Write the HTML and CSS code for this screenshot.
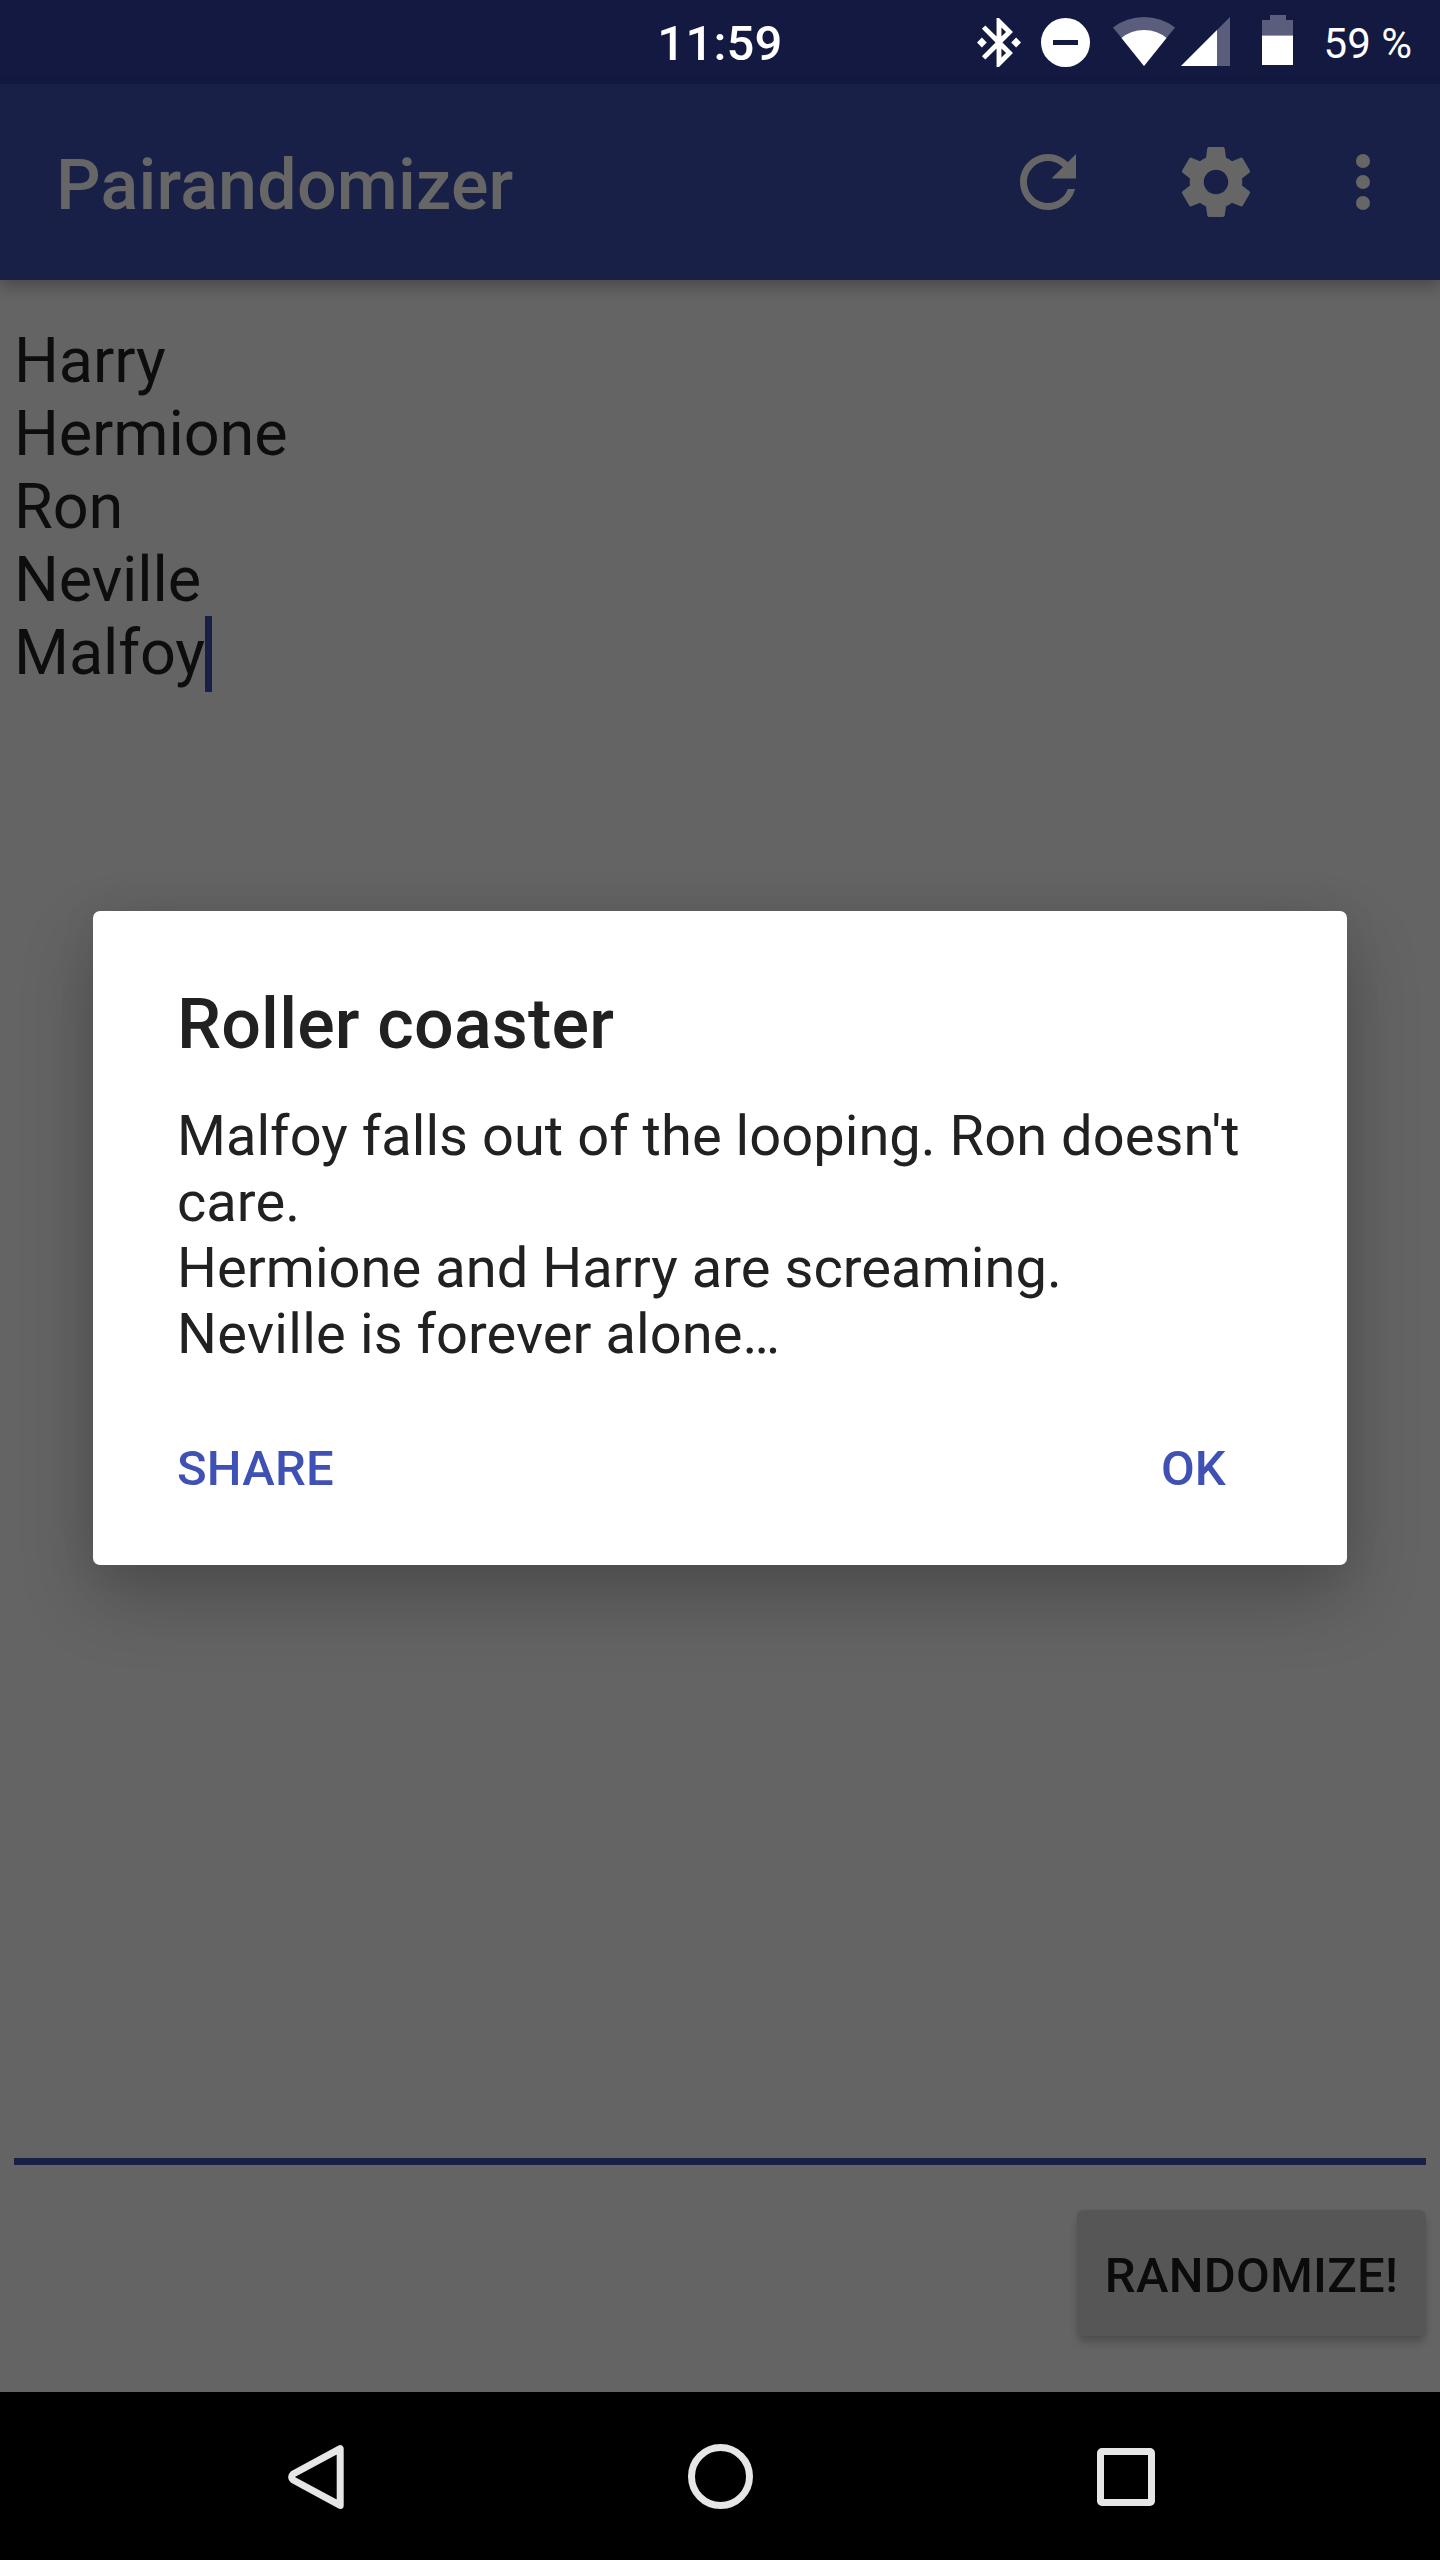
FILE: index.html
```html
<!DOCTYPE html>
<html lang="en">
<head>
<meta charset="utf-8">
<title>Pairandomizer</title>
<link rel="stylesheet" href="styles.css">
</head>
<body>
<div class="screen">
  <header class="status">
    <span></span>
    <span class="clock">11:59</span>
    <div class="status-icons">
      <svg class="bluetooth" viewBox="3 2 18 20"><path d="M7 12l-2-2-2 2 2 2 2-2zm10.71-4.29L12 2h-1v7.59L6.41 5 5 6.41 10.59 12 5 17.59 6.41 19 11 14.41V22h1l5.71-5.71-4.3-4.29 4.3-4.29zM13 5.83l1.88 1.88L13 9.59V5.83zm1.88 10.46L13 18.17v-3.76l1.88 1.88zM19 10l-2 2 2 2 2-2-2-2z"/></svg>
      <svg class="dnd" viewBox="0 0 49 49"><path fill-rule="evenodd" d="M24.5 0a24.5 24.5 0 1 0 0 49a24.5 24.5 0 1 0 0-49zM12 22h25v5H12z"/></svg>
      <svg class="wifi" viewBox="0 0 62 49"><path class="faint" d="M31 49L0 10.5Q13.500 0 31 0T62 10.500z"/><path d="M31 49L8.500 21Q18 13 31 13T53.500 21z"/></svg>
      <svg class="cell" viewBox="0 0 49 49"><path class="faint" d="M0 49L49 0V49z"/><path d="M0 49L36 13V49z"/></svg>
      <svg class="battery" viewBox="0 0 31 50"><path class="faint" d="M8 0h16v5h7v15.500H0V5h8z"/><path d="M0 20.500h31V50H0z"/></svg>
      <span class="percent">59 %</span>
    </div>
  </header>

  <div class="appbar">
    <h1 class="app-title">Pairandomizer</h1>
    <svg class="action" viewBox="0 0 24 24"><path d="M17.650 6.350C16.200 4.900 14.210 4 12 4c-4.420 0-7.990 3.580-7.990 8s3.570 8 7.990 8c3.730 0 6.840-2.550 7.730-6h-2.080c-.82 2.330-3.040 4-5.650 4-3.310 0-6-2.690-6-6s2.690-6 6-6c1.660 0 3.140.69 4.220 1.780L13 11h7V4l-2.350 2.350z"/></svg>
    <svg class="action settings" viewBox="0 0 24 24"><path d="M19.430 12.980c.04-.32.07-.64.07-.98s-.03-.66-.07-.98l2.110-1.650c.19-.15.24-.42.12-.64l-2-3.460c-.12-.22-.39-.3-.61-.22l-2.490 1c-.52-.4-1.080-.73-1.690-.98l-.38-2.650C14.460 2.180 14.250 2 14 2h-4c-.25 0-.46.18-.49.42l-.38 2.650c-.61.25-1.170.59-1.690.98l-2.490-1c-.23-.09-.49 0-.61.22l-2 3.460c-.13.22-.07.49.12.64l2.110 1.650c-.04.32-.07.65-.07.98s.03.66.07.98l-2.110 1.650c-.19.15-.24.42-.12.64l2 3.460c.12.22.39.3.61.22l2.490-1c.52.4 1.080.73 1.690.98l.38 2.650c.03.24.24.42.49.42h4c.25 0 .46-.18.49-.42l.38-2.650c.61-.25 1.170-.59 1.690-.98l2.490 1c.23.09.49 0 .61-.22l2-3.460c.12-.22.07-.49-.12-.64l-2.110-1.650zM12 15.500c-1.930 0-3.500-1.570-3.500-3.500s1.570-3.500 3.500-3.500 3.500 1.570 3.500 3.500-1.570 3.500-3.500 3.500z"/></svg>
    <svg class="action more" viewBox="0 0 24 24"><circle cx="12" cy="6" r="2"/><circle cx="12" cy="12" r="2"/><circle cx="12" cy="18" r="2"/></svg>
  </div>

  <main class="content">
    <div class="names">
      <div>Harry</div>
      <div>Hermione</div>
      <div>Ron</div>
      <div>Neville</div>
      <div class="last">Malfoy<span class="cursor"></span></div>
    </div>
    <button class="randomize">RANDOMIZE!</button>
  </main>

  <nav class="navbar">
    <svg class="back" viewBox="0 0 56 66"><path d="M52.200 4.600V61.400L5.200 36Q2 33 5.200 30z"/></svg>
    <svg class="home" viewBox="0 0 65 65"><circle cx="32.500" cy="32.500" r="29"/></svg>
    <svg class="recent" viewBox="0 0 58 58"><rect x="3.500" y="3.500" width="51" height="51" rx="1.500"/></svg>
  </nav>

  <section class="dialog">
    <h2 class="dialog-title">Roller coaster</h2>
    <p class="message">Malfoy falls out of the looping. Ron doesn't care.<br>Hermione and Harry are screaming.<br><span class="loner">Neville</span> is forever alone…</p>
    <div class="dialog-actions"><span>SHARE</span><span>OK</span></div>
  </section>
</div>
</body>
</html>
```
FILE: styles.css
```css
* { box-sizing: border-box; }
body { margin: 0; background: #000; font-family: Roboto, sans-serif; }
h1, h2, p { margin: 0; font-weight: 500; }
svg { display: block; flex: none; }

.screen {
  position: relative;
  display: flex;
  flex-direction: column;
  width: 1440px;
  height: 2560px;
  overflow: hidden;
}

/* Status bar */
.status {
  display: grid;
  grid-template-columns: 1fr auto 1fr;
  height: 84px;
  background: #131940;
  color: #fff;
}
.clock { font-size: 49px; font-weight: 500; letter-spacing: .2px; line-height: 88px; }
.status-icons { display: flex; justify-content: flex-end; padding-right: 28px; fill: #fff; }
.faint { fill: #5a5d7c; }
.bluetooth { width: 44px; height: 49px; margin: 18px 20px 0 0; }
.dnd { width: 49px; height: 49px; margin: 18px 23px 0 0; }
.wifi { width: 62px; height: 49px; margin: 17px 6px 0 0; }
.cell { width: 49px; height: 49px; margin: 17px 32px 0 0; }
.battery { width: 31px; height: 50px; margin: 15px 0 0; }
.percent { width: 119px; text-align: right; font-size: 42px; line-height: 87px; white-space: nowrap; }

/* App bar */
.appbar {
  position: relative;
  display: flex;
  align-items: center;
  height: 196px;
  padding: 0 35px 0 56px;
  background: #192048;
  box-shadow: 0 7px 14px rgba(0, 0, 0, .26);
}
.app-title { flex: 1; color: #666; font-size: 70px; line-height: 82px; letter-spacing: .2px; padding-top: 6px; }
.action { width: 84px; height: 84px; fill: #666; }
.settings { margin-left: 84px; }
.more { margin-left: 63px; }

/* Editor */
.content {
  display: flex;
  flex: 1;
  flex-direction: column;
  align-items: flex-end;
  padding: 44px 14px 56px;
  background: #646464;
}
.names {
  flex: 1;
  align-self: stretch;
  border-bottom: 7px solid #192048;
  color: #0d0d0d;
  font-size: 63px;
  line-height: 73px;
  letter-spacing: -.12px;
}
.last { display: flex; }
.cursor { width: 7px; height: 76px; background: #192048; }
.randomize {
  width: 349px;
  height: 126px;
  margin-top: 45px;
  padding: 5px 0 0;
  border: 0;
  border-radius: 7px;
  background: #565656;
  box-shadow: 0 7px 8px -1px rgba(0, 0, 0, .22), 0 0 3px rgba(0, 0, 0, .06);
  color: #0b0b0b;
  font: 500 49px Roboto, sans-serif;
  letter-spacing: .25px;
}

/* Navigation bar */
.navbar {
  display: flex;
  height: 168px;
  padding: 52px 285px 0 288px;
  justify-content: space-between;
  background: #000;
  fill: none;
  stroke: #e6e6e6;
  stroke-width: 7;
  stroke-linejoin: round;
}
.back { width: 56px; height: 66px; }
.home { width: 65px; height: 65px; }
.recent { width: 58px; height: 58px; margin-top: 4px; }

/* Dialog */
.dialog {
  position: absolute;
  top: 911px;
  left: 93px;
  width: 1254px;
  height: 654px;
  padding: 72px 84px 0;
  border-radius: 7px;
  background: #fff;
  box-shadow: 0 32px 72px rgba(0, 0, 0, .24), 0 0 40px rgba(0, 0, 0, .06);
  color: #212121;
}
.dialog-title { font-size: 70px; line-height: 82px; letter-spacing: .17px; }
.message { margin-top: 38px; font-size: 56px; font-weight: 400; line-height: 66px; letter-spacing: .05px; }
.loner { letter-spacing: .3px; }
.dialog-actions {
  display: flex;
  justify-content: space-between;
  margin-top: 73px;
  padding-right: 37px;
  color: #3f51b5;
  font-size: 49px;
  font-weight: 500;
  line-height: 58px;
  letter-spacing: .2px;
}
```
